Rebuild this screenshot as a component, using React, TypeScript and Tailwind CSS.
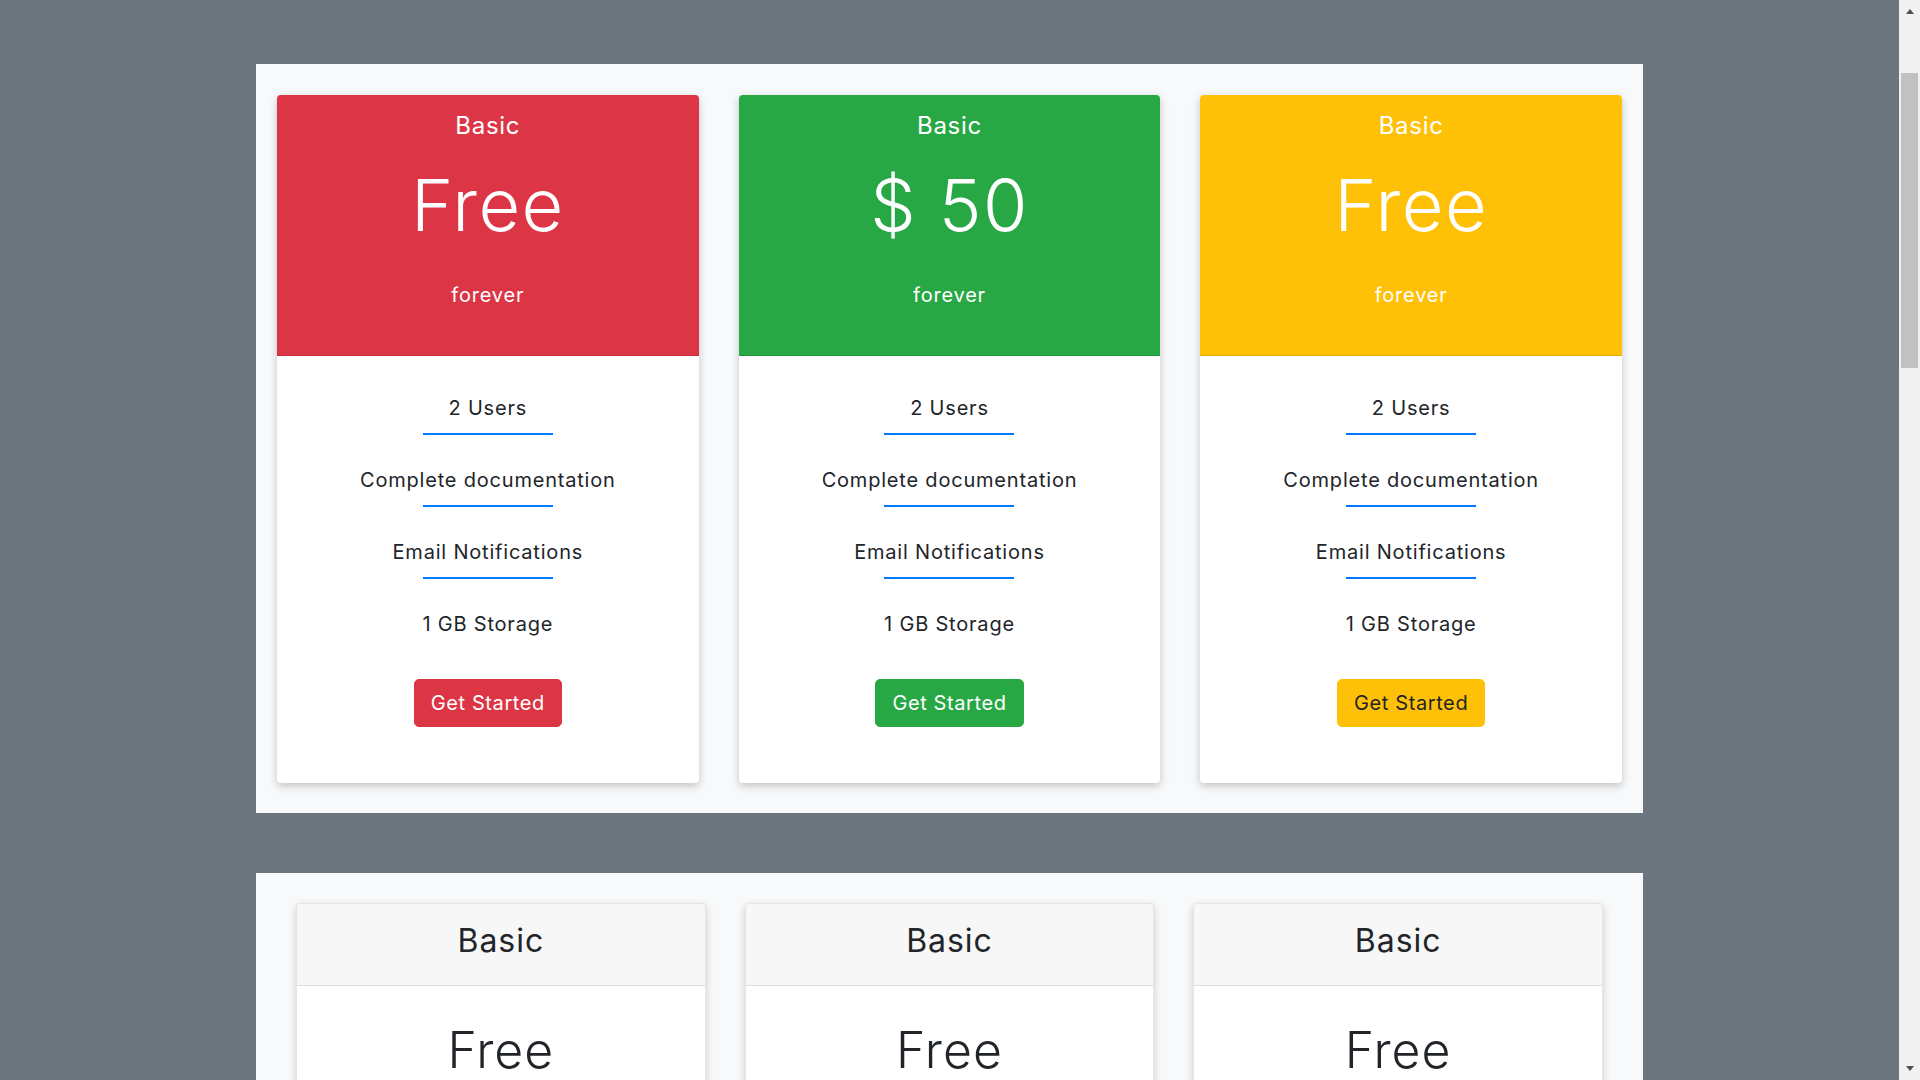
import React from "react";

type Plan = {
  title: string;
  price: string;
  period: string;
  header: string;
  button: string;
};

const features = ["2 Users", "Complete documentation", "Email Notifications", "1 GB Storage"];

const colored: Plan[] = [
  { title: "Basic", price: "Free", period: "forever", header: "bg-[#dc3545]", button: "bg-[#dc3545] border-[#dc3545] text-white" },
  { title: "Basic", price: "$ 50", period: "forever", header: "bg-[#28a745]", button: "bg-[#28a745] border-[#28a745] text-white" },
  { title: "Basic", price: "Free", period: "forever", header: "bg-[#ffc107]", button: "bg-[#ffc107] border-[#ffc107] text-[#212529]" },
];

const font = "font-['Inter','Liberation_Sans',sans-serif]";

function ColorCard({ plan }: { plan: Plan }) {
  return (
    <div className="flex flex-col overflow-hidden rounded bg-white shadow-[0_3px_8px_rgba(0,0,0,0.22)]">
      <div className={`flex flex-col items-center border-b border-black/10 pt-[15px] text-white ${plan.header}`}>
        <div className="text-[24px] leading-[32px] tracking-[0.03em]">{plan.title}</div>
        <div className="mt-[23px] text-[72px] font-light leading-[80px] tracking-[0.02em]">{plan.price}</div>
        <div className="mt-[36px] mb-[46px] text-[20px] leading-[28px] tracking-[0.04em]">{plan.period}</div>
      </div>
      <div className="flex flex-col items-center pt-[37px] pb-[56px] text-[#212529]">
        {features.map((f, i) => (
          <div key={f} className="flex flex-col items-center">
            <div className="text-[20px] leading-[30px] tracking-[0.04em]">{f}</div>
            {i < features.length - 1 && <div className="mt-[10px] mb-[30px] h-[2px] w-[130px] bg-[#007bff]" />}
          </div>
        ))}
        <button className={`mt-[40px] rounded-[5px] border px-4 py-2 text-[20px] leading-[30px] tracking-[0.03em] ${plan.button}`}>
          Get Started
        </button>
      </div>
    </div>
  );
}

function PlainCard() {
  return (
    <div className="flex flex-col overflow-hidden rounded border border-black/10 bg-white shadow-[0_3px_8px_rgba(0,0,0,0.18)]">
      <div className="flex justify-center border-b border-black/10 bg-[#f7f7f7] pt-[13px] pb-[20px]">
        <h4 className="text-[32px] leading-[48px] tracking-[0.03em] text-[#212529]">Basic</h4>
      </div>
      <div className="flex flex-col items-center pt-[34px] pb-10 text-[#212529]">
        <div className="text-[50px] font-light leading-[60px] tracking-[0.02em]">Free</div>
        <ul className="mt-6 flex flex-col items-center gap-3 text-[20px] leading-[30px] tracking-[0.04em]">
          {features.map((f) => (
            <li key={f}>{f}</li>
          ))}
        </ul>
        <button className="mt-8 rounded-[5px] border border-[#007bff] px-4 py-2 text-[20px] leading-[30px] text-[#007bff]">
          Sign up for free
        </button>
      </div>
    </div>
  );
}

function Scrollbar() {
  return (
    <div className="fixed top-0 right-0 h-screen w-[21px] bg-[#f1f1f1]">
      <div className="absolute top-[9px] left-[7px] h-0 w-0 border-x-[4.5px] border-b-[5px] border-x-transparent border-b-[#505050]" />
      <div className="absolute top-[73px] left-[2px] h-[295px] w-[17px] bg-[#c1c1c1]" />
      <div className="absolute bottom-[9px] left-[7px] h-0 w-0 border-x-[4.5px] border-t-[5px] border-x-transparent border-t-[#505050]" />
    </div>
  );
}

export default function App() {
  return (
    <div className={`min-h-screen bg-[#6c757d] pt-[64px] pb-16 ${font}`}>
      <section className="ml-[256px] grid w-[1387px] grid-cols-3 gap-[40px] bg-[#f8f9fa] px-[21px] pt-[31px] pb-[30px]">
        {colored.map((p, i) => (
          <ColorCard key={i} plan={p} />
        ))}
      </section>
      <section className="mt-[60px] ml-[256px] grid w-[1387px] grid-cols-3 gap-[39px] bg-[#f8f9fa] px-[40px] pt-[30px] pb-[30px]">
        <PlainCard />
        <PlainCard />
        <PlainCard />
      </section>
      <Scrollbar />
    </div>
  );
}
